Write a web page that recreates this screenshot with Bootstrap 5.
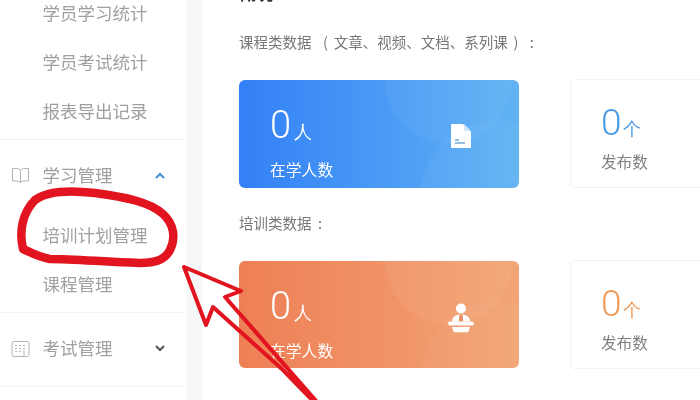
<!DOCTYPE html>
<html lang="zh">
<head>
<meta charset="utf-8">
<title>学习管理</title>
<link href="https://cdn.jsdelivr.net/npm/bootstrap@5.3.0/dist/css/bootstrap.min.css" rel="stylesheet">
<style>
html,body{height:400px;overflow:hidden;background:#f6f7f9;}
body{font-family:"Noto Sans CJK SC","Liberation Sans",sans-serif;position:relative;}
.shell{height:400px;overflow:hidden;filter:blur(.35px);}
.side{width:187px;flex:none;background:#fff;}
.side-wrap{margin-top:-11px;}
.side-group{border-bottom:1px solid #f3f4f5;}
.g1{padding-bottom:3px;}
.g2{padding:11px 0 3px;}
.g3{padding:11px 0 13px;}
.side-item{height:49px;padding-left:42.500px;font-size:17.500px;color:#a0a0a0;white-space:nowrap;}
.side-head{height:49px;color:#a0a0a0;font-size:17.500px;padding-left:11px;}
.side-head span{margin-left:-.5px;}
.g2 .side-head{margin-bottom:11px;}
.head-ico{width:19px;margin-right:13px;flex:none;}
.chev{margin-left:auto;margin-right:22px;}
.main-pane{margin-left:15px;width:498px;flex:none;background:#fff;padding-left:37px;}
.top-title{margin-top:-20px;height:26px;line-height:26px;font-size:17px;font-weight:700;color:#333;}
.sec-label{font-size:14.500px;line-height:20px;color:#777;white-space:nowrap;}
.l1{margin-top:26px;margin-bottom:28px;word-spacing:2.500px;}
.l2{margin-top:25px;margin-bottom:28px;}
.stat-row{gap:51px;}
.big-card{width:280px;height:108px;flex:none;border-radius:6px;color:#fff;padding-left:31px;}
.big-blue{background:
 radial-gradient(circle 77px at 258px 117px,rgba(255,255,255,.04) 99%,transparent 100%),
 radial-gradient(circle 64px at 210px 0,rgba(255,255,255,.04) 99%,transparent 100%),
 linear-gradient(90deg,#3380f6,#60b3f4);}
.big-orange{height:107px;background:
 radial-gradient(circle 77px at 258px 117px,rgba(255,255,255,.03) 99%,transparent 100%),
 radial-gradient(circle 64px at 210px 0,rgba(255,255,255,.05) 99%,transparent 100%),
 linear-gradient(90deg,#ee7f55,#f2a575);}
.big-body{padding-top:22px;}
.big-num{font-family:Roboto,"Liberation Sans",sans-serif;font-weight:300;font-size:38px;line-height:46px;}
.big-unit{font-size:18px;margin-left:3px;font-weight:300;}
.big-text{font-size:15.800px;line-height:24px;margin-top:3px;}
.big-ico{margin-right:47px;flex:none;}
.ico-file{margin-top:3px;}
.ico-podium{margin-top:6px;margin-right:45px;}
.small-card{width:180px;flex:none;height:109px;border:1px solid #f3f3f3;border-radius:5px;padding:22px 0 0 30px;margin-top:-1px;}
.small-num{font-family:Roboto,"Liberation Sans",sans-serif;font-size:37px;line-height:42px;font-weight:300;}
.small-unit{font-size:18px;margin-left:1px;}
.small-text{font-size:15.600px;line-height:22px;color:#808080;}
.c-blue{color:#4a9be0;}
.c-orange{color:#ef9b58;}
.mark-layer{position:absolute;left:0;top:0;width:700px;height:400px;pointer-events:none;}
</style>
</head>
<body>
<div class="shell d-flex">
  <aside class="side">
    <div class="side-wrap">
      <div class="side-group g1">
        <div class="side-item d-flex align-items-center">学员学习统计</div>
        <div class="side-item d-flex align-items-center">学员考试统计</div>
        <div class="side-item d-flex align-items-center">报表导出记录</div>
      </div>
      <div class="side-group g2">
        <div class="side-head d-flex align-items-center">
          <svg class="head-ico" width="19" height="17" viewBox="0 0 19 17" fill="none" stroke="#b4b4b4" stroke-width="1"><path d="M9.500 3C8 1.600 5 1.200 1.500 1.500V14C5 13.700 8 14 9.500 15.500 11 14 14 13.700 17.500 14V1.500C14 1.200 11 1.600 9.500 3ZM9.500 3V15.500"/></svg>
          <span>学习管理</span>
          <svg class="chev" width="10" height="7" viewBox="0 0 10 7" fill="none" stroke="#3f8fd2" stroke-width="2"><path d="M1 6 5 2l4 4"/></svg>
        </div>
        <div class="side-item d-flex align-items-center">培训计划管理</div>
        <div class="side-item d-flex align-items-center">课程管理</div>
      </div>
      <div class="side-group g3">
        <div class="side-head d-flex align-items-center">
          <svg class="head-ico" width="19" height="18" viewBox="0 0 19 18" fill="none" stroke="#b4b4b4" stroke-width="1"><rect x="1" y="1.500" width="17" height="15" rx="2"/><path d="M4 5.500h2M8 5.500h2M12 5.500h2M4 8.500h2M8 8.500h2M12 8.500h2M4 11.500h2M8 11.500h2M13 10v6.500"/></svg>
          <span>考试管理</span>
          <svg class="chev" width="10" height="7" viewBox="0 0 10 7" fill="none" stroke="#555" stroke-width="2"><path d="M1 1l4 4 4-4"/></svg>
        </div>
      </div>
    </div>
  </aside>
  <main class="main-pane">
    <div class="top-title">概况</div>
    <div class="sec-label l1">课程类数据 &nbsp;( 文章、视频、文档、系列课 ) &nbsp;:</div>
    <div class="stat-row d-flex">
      <div class="big-card big-blue d-flex align-items-center justify-content-between">
        <div class="big-body align-self-start">
          <div class="big-num">0<span class="big-unit">人</span></div>
          <div class="big-text">在学人数</div>
        </div>
        <svg class="big-ico ico-file" width="22" height="26" viewBox="0 0 22 26"><path fill="#fff" d="M2 1h11l8 8v15a1 1 0 0 1-1 1H2a1 1 0 0 1-1-1V2a1 1 0 0 1 1-1Z"/><path fill="#cfe8fb" d="M14 1l7 7h-7Z"/><path stroke="#6fa9d8" stroke-width="1.500" d="M5 17h4M5 20h10"/></svg>
      </div>
      <div class="small-card">
        <div class="small-num c-blue">0<span class="small-unit">个</span></div>
        <div class="small-text">发布数</div>
      </div>
    </div>
    <div class="sec-label l2">培训类数据 &nbsp;:</div>
    <div class="stat-row d-flex">
      <div class="big-card big-orange d-flex align-items-center justify-content-between">
        <div class="big-body align-self-start">
          <div class="big-num">0<span class="big-unit">人</span></div>
          <div class="big-text">在学人数</div>
        </div>
        <svg class="big-ico ico-podium" width="26" height="30" viewBox="0 0 26 30"><circle cx="13" cy="5.500" r="5" fill="#fff"/><path fill="#fff" d="M4 18.500c0-4.500 4-7 9-7s9 2.500 9 7Z"/><path fill="#e98a60" d="M11.500 11.500h3l.7 7h-4.400Z"/><rect x="0" y="18.500" width="26" height="4" rx="2" fill="#fff"/><path fill="#fff" d="M4 24h18l-1.500 4.500a1 1 0 0 1-1 .7h-13a1 1 0 0 1-1-.7Z"/></svg>
      </div>
      <div class="small-card">
        <div class="small-num c-orange">0<span class="small-unit">个</span></div>
        <div class="small-text">发布数</div>
      </div>
    </div>
  </main>
</div>
<svg class="mark-layer" viewBox="0 0 700 400" fill="none" stroke="#e2141f" stroke-linejoin="round" stroke-linecap="round">
  <path stroke-width="8.500" d="M23 249C19 232 22 213 35 200 47 191 70 190 95 193 125 197 150 202 163 214 174 224 176 238 170 250 165 260 155 263 140 263 105 262 75 259 50 259 38 257 30 252 23 249Z"/>
  <path stroke-width="4" d="M184 267 241 291 225 297 317 402M184 267 206 325 213 307 283 370 314 402"/>
</svg>
<script src="https://cdn.jsdelivr.net/npm/bootstrap@5.3.0/dist/js/bootstrap.bundle.min.js"></script>
</body>
</html>
